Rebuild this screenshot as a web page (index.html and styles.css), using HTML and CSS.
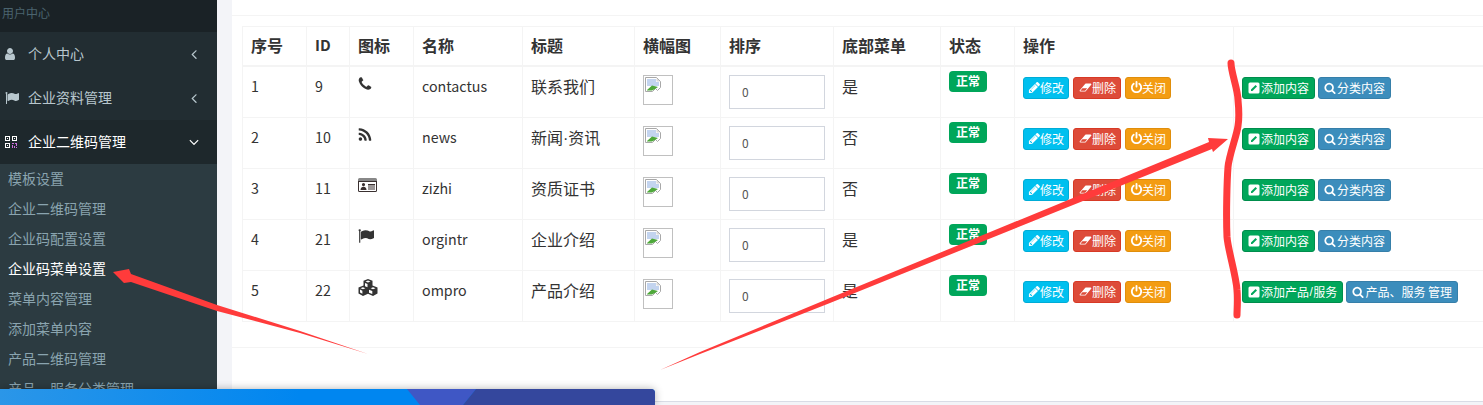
FILE: index.html
```html
<!DOCTYPE html>
<html lang="zh-CN">
<head>
<meta charset="utf-8">
<title>企业码菜单设置</title>
<link rel="stylesheet" href="styles.css">
</head>
<body>
<svg class="sprite" xmlns="http://www.w3.org/2000/svg">
  <symbol id="i-user" viewBox="0 0 1792 1792"><path d="M1536 1399q0 109-62.5 187t-150.5 78h-854q-88 0-150.5-78t-62.5-187q0-85 8.5-160.5t31.5-152 58.5-131 94-89 134.5-34.5q131 128 313 128t313-128q76 0 134.5 34.5t94 89 58.5 131 31.5 152 8.5 160.5zm-256-887q0 159-112.5 271.5t-271.5 112.5-271.5-112.5-112.5-271.5 112.5-271.5 271.5-112.5 271.5 112.5 112.5 271.5z"/></symbol>
  <symbol id="i-flag" viewBox="0 0 1792 1792"><path d="M320 256q0 72-64 110v1266q0 13-9.5 22.5t-22.5 9.5h-64q-13 0-22.5-9.5t-9.5-22.5v-1266q-64-38-64-110 0-53 37.5-90.5t90.5-37.5 90.5 37.5 37.5 90.5zm1472 64v763q0 25-12.5 38.5t-39.5 27.5q-215 116-369 116-61 0-123.5-22t-108.5-48-115.5-48-142.5-22q-192 0-464 146-17 9-33 9-26 0-45-19t-19-45v-742q0-32 31-55 21-14 79-43 236-120 421-120 107 0 200 29t219 88q38 19 88 19 54 0 117.5-21t110-47 88-47 54.5-21q26 0 45 19t19 45z"/></symbol>
  <symbol id="i-qr" viewBox="0 0 12 12"><path fill-rule="evenodd" d="M0 0h5v5H0zM1 1v3h3V1zM7 0h5v5H7zM8 1v3h3V1zM0 7h5v5H0zM1 8v3h3V8zM2 2h1v1H2zM9 2h1v1H9zM2 9h1v1H2z"/><path fill="#d070e0" d="M7 7h2v1H7zM10 7h2v3h-1V8h-1zM7 9h1v3H7zM9 10h1v2H9zM11 11h1v1h-1z"/></symbol>
  <symbol id="i-left" viewBox="0 0 1792 1792"><path d="M1203 544q0 13-10 23l-393 393 393 393q10 10 10 23t-10 23l-50 50q-10 10-23 10t-23-10l-466-466q-10-10-10-23t10-23l466-466q10-10 23-10t23 10l50 50q10 10 10 23z"/></symbol>
  <symbol id="i-down" viewBox="0 0 1792 1792"><path d="M1395 736q0 13-10 23l-466 466q-10 10-23 10t-23-10l-466-466q-10-10-10-23t10-23l50-50q10-10 23-10t23 10l393 393 393-393q10-10 23-10t23 10l50 50q10 10 10 23z"/></symbol>
  <symbol id="i-phone" viewBox="0 0 1792 1792"><path d="M1600 1240q0 27-10 70.5t-21 68.5q-21 50-122 106-94 51-186 51-27 0-53-3.5t-57.5-12.5-47-14.5-55.5-20.5-49-18q-98-35-175-83-127-79-264-216t-216-264q-48-77-83-175-3-9-18-49t-20.5-55.5-14.5-47-12.5-57.5-3.5-53q0-92 51-186 56-101 106-122 25-11 68.5-21t70.5-10q14 0 21 3 18 6 53 76 11 19 30 54t35 63.5 31 53.5q3 4 17.5 25t21.5 35.5 7 28.5q0 20-28.5 50t-62 55-62 53-28.5 46q0 9 5 22.5t8.5 20.5 14 24 11.5 19q76 137 174 235t235 174q2 1 19 11.5t24 14 20.5 8.5 22.5 5q18 0 46-28.5t53-62 55-62 50-28.5q14 0 28.5 7t35.5 21.5 25 17.5q25 15 53.5 31t63.5 35 54 30q70 35 76 53 3 7 3 21z"/></symbol>
  <symbol id="i-rss" viewBox="0 0 1792 1792"><path d="M576 1344q0 80-56 136t-136 56-136-56-56-136 56-136 136-56 136 56 56 136zm512 123q2 28-17 48-18 21-47 21h-135q-25 0-43-16.5t-20-41.5q-22-229-184.5-391.5t-391.5-184.5q-25-2-41.5-20t-16.5-43v-135q0-29 21-47 17-17 43-17h5q160 13 306 80.5t259 181.5q114 113 181.5 259t80.5 306zm512 2q2 27-18 47-18 20-46 20h-143q-26 0-44.5-17.5t-19.5-42.5q-12-215-101-408.5t-231.5-336-336-231.5-408.5-102q-25-1-42.5-19.5t-17.5-43.5v-143q0-28 20-46 18-18 44-18h3q262 13 501.5 120t425.5 294q187 186 294 425.5t120 501.5z"/></symbol>
  <symbol id="i-card" viewBox="0 0 19 14"><path d="M1.500 0h16A1.500 1.500 0 0 1 19 1.500V3H0V1.500A1.500 1.500 0 0 1 1.500 0z" fill="#888"/><path fill-rule="evenodd" d="M0 3h19v9.500a1.500 1.500 0 0 1-1.500 1.500h-16A1.500 1.500 0 0 1 0 12.500zM1 4v8.500a.5.5 0 0 0 .5.5h16a.5.5 0 0 0 .5-.5V4zM5.500 5a1.600 1.600 0 1 1 0 3.200 1.600 1.600 0 0 1 0-3.200zM2.500 12c0-2 1-3.300 3-3.300s3 1.300 3 3.300zM10 6h7v1.500h-7zM10 8.500h7v1h-7zM10 10.500h7v1h-7z"/></symbol>
  <symbol id="i-cubes" viewBox="0 0 20 17"><path fill-rule="evenodd" d="M10 0l4.500 1.800v4.700L19.500 8.500v6L15 17l-5-2.300L5 17 .5 14.500v-6l5-2V1.800zM10 1.500L7.500 2.500 10 3.500l2.500-1zM7 4v3.200l2.500 1V5zM4.900 8.200 2.500 9.300l2.500 1 2.400-1zM2 10.600v2.900l2.400 1.300v-3zM15 8.200l-2.400 1.100 2.400 1 2.500-1zM11 10.800v2.900l3.300 1.300v-3z"/></symbol>
  <symbol id="i-pencil" viewBox="0 0 1792 1792"><path d="M491 1536l91-91-235-235-91 91v107h128v128h107zm523-928q0-22-22-22-10 0-17 7l-542 542q-7 7-7 17 0 22 22 22 10 0 17-7l542-542q7-7 7-17zm-54-192l416 416-832 832h-416v-416zm683 96q0 53-37 90l-166 166-416-416 166-165q36-38 90-38 53 0 91 38l235 234q37 39 37 91z"/></symbol>
  <symbol id="i-eraser" viewBox="0 0 2048 1792"><path d="M960 1408l336-384h-768l-336 384h768zm1013-1077q15 34 9.500 71.500t-30.500 65.500l-896 1024q-38 44-96 44h-768q-38 0-69.500-20.500t-47.500-54.500q-15-34-9.500-71.500t30.500-65.500l896-1024q38-44 96-44h768q38 0 70 20.500t47 54.500z"/></symbol>
  <symbol id="i-power" viewBox="0 0 1792 1792"><path d="M1664 896q0 156-61 298t-164 245-245 164-298 61-298-61-245-164-164-245-61-298q0-182 80.500-343t226.500-270q43-32 95.500-25t83.500 50q32 42 24.500 94.500t-49.500 84.500q-98 74-151.500 181t-53.500 228q0 104 40.500 198.500t109.500 163.500 163.500 109.500 198.500 40.500 198.500-40.500 163.500-109.500 109.500-163.500 40.500-198.500q0-121-53.500-228t-151.500-181q-42-32-49.500-84.500t24.500-94.500q31-43 84-50t95 25q146 109 226.500 270t80.500 343zm-640-768v640q0 52-38 90t-90 38-90-38-38-90v-640q0-52 38-90t90-38 90 38 38 90z"/></symbol>
  <symbol id="i-edit" viewBox="0 0 12 12"><path d="M2 .5h8A1.500 1.500 0 0 1 11.500 2v8a1.500 1.500 0 0 1-1.500 1.500H2A1.500 1.500 0 0 1 .5 10V2A1.500 1.500 0 0 1 2 .5z" fill="#fff"/><path d="M3 9V7.600L7.600 3 9 4.400 4.400 9z" fill="#00a65a"/></symbol>
  <symbol id="i-search" viewBox="0 0 1792 1792"><path d="M1216 832q0-185-131.500-316.500t-316.500-131.500-316.500 131.500-131.500 316.500 131.500 316.500 316.500 131.500 316.500-131.500 131.500-316.500zm512 832q0 52-38 90t-90 38q-54 0-90-38l-343-342q-179 124-399 124-143 0-273.500-55.500t-225-150-150-225-55.500-273.500 55.500-273.500 150-225 225-150 273.500-55.500 273.500 55.500 225 150 150 225 55.500 273.500q0 220-124 399l343 343q37 37 37 90z"/></symbol>
  <symbol id="i-broken" viewBox="0 0 16 16"><path d="M.5.500h11l4 4v6l-3 3-2-2-3 3H.5z" fill="#fff" stroke="#a8a8a8"/><path d="M2 2h9v3h3v4H2z" fill="#c3d4ef"/><path d="M2 13l5-4.500 6 1.500-3 2-3 1.500H2z" fill="#4ea83a"/><path d="M11.500 1l3.500 3.500h-3.500z" fill="#d8d8d8"/></symbol>
</svg>

<div class="app">
  <aside class="sidebar">
    <div class="side-head">用户中心</div>
    <a class="menu"><svg class="mi mi-user"><use href="#i-user"/></svg><span class="menu-text">个人中心</span><svg class="chev"><use href="#i-left"/></svg></a>
    <a class="menu"><svg class="mi"><use href="#i-flag"/></svg><span class="menu-text">企业资料管理</span><svg class="chev"><use href="#i-left"/></svg></a>
    <a class="menu menu-open"><svg class="mi mi-qr"><use href="#i-qr"/></svg><span class="menu-text">企业二维码管理</span><svg class="chev"><use href="#i-down"/></svg></a>
    <ul class="submenu">
      <li>模板设置</li>
      <li>企业二维码管理</li>
      <li>企业码配置设置</li>
      <li class="current">企业码菜单设置</li>
      <li>菜单内容管理</li>
      <li>添加菜单内容</li>
      <li>产品二维码管理</li>
      <li>产品、服务分类管理</li>
    </ul>
  </aside>

  <main class="main">
    <div class="panel-top"></div>
    <div class="panel-body">
      <table class="grid">
        <colgroup>
          <col class="c1"><col class="c2"><col class="c3"><col class="c4"><col class="c5"><col class="c6"><col class="c7"><col class="c8"><col class="c9"><col class="c10"><col class="c11">
        </colgroup>
        <thead>
          <tr><th>序号</th><th>ID</th><th>图标</th><th>名称</th><th>标题</th><th>横幅图</th><th>排序</th><th>底部菜单</th><th>状态</th><th>操作</th><th></th></tr>
        </thead>
        <tbody>
          <tr>
            <td>1</td><td>9</td><td><svg class="ti ti-phone"><use href="#i-phone"/></svg></td><td>contactus</td><td>联系我们</td>
            <td><span class="thumb"><svg class="broken"><use href="#i-broken"/></svg></span></td>
            <td><input class="sort" value="0"></td><td>是</td><td><span class="badge">正常</span></td>
            <td><div class="ops"><a class="btn b-info"><svg class="bi bi-big"><use href="#i-pencil"/></svg>修改</a><a class="btn b-danger"><svg class="bi bi-wide"><use href="#i-eraser"/></svg>删除</a><a class="btn b-warn"><svg class="bi bi-big"><use href="#i-power"/></svg>关闭</a></div></td>
            <td><div class="ops ops-tight"><a class="btn b-ok"><svg class="bi bi-edit"><use href="#i-edit"/></svg>添加内容</a><a class="btn b-pri"><svg class="bi bi-edit"><use href="#i-search"/></svg>分类内容</a></div></td>
          </tr>
          <tr>
            <td>2</td><td>10</td><td><svg class="ti ti-phone"><use href="#i-rss"/></svg></td><td>news</td><td>新闻<span class="narrow">·</span>资讯</td>
            <td><span class="thumb"><svg class="broken"><use href="#i-broken"/></svg></span></td>
            <td><input class="sort" value="0"></td><td>否</td><td><span class="badge">正常</span></td>
            <td><div class="ops"><a class="btn b-info"><svg class="bi bi-big"><use href="#i-pencil"/></svg>修改</a><a class="btn b-danger"><svg class="bi bi-wide"><use href="#i-eraser"/></svg>删除</a><a class="btn b-warn"><svg class="bi bi-big"><use href="#i-power"/></svg>关闭</a></div></td>
            <td><div class="ops ops-tight"><a class="btn b-ok"><svg class="bi bi-edit"><use href="#i-edit"/></svg>添加内容</a><a class="btn b-pri"><svg class="bi bi-edit"><use href="#i-search"/></svg>分类内容</a></div></td>
          </tr>
          <tr>
            <td>3</td><td>11</td><td><svg class="ti ti-card"><use href="#i-card"/></svg></td><td>zizhi</td><td>资质证书</td>
            <td><span class="thumb"><svg class="broken"><use href="#i-broken"/></svg></span></td>
            <td><input class="sort" value="0"></td><td>否</td><td><span class="badge">正常</span></td>
            <td><div class="ops"><a class="btn b-info"><svg class="bi bi-big"><use href="#i-pencil"/></svg>修改</a><a class="btn b-danger"><svg class="bi bi-wide"><use href="#i-eraser"/></svg>删除</a><a class="btn b-warn"><svg class="bi bi-big"><use href="#i-power"/></svg>关闭</a></div></td>
            <td><div class="ops ops-tight"><a class="btn b-ok"><svg class="bi bi-edit"><use href="#i-edit"/></svg>添加内容</a><a class="btn b-pri"><svg class="bi bi-edit"><use href="#i-search"/></svg>分类内容</a></div></td>
          </tr>
          <tr>
            <td>4</td><td>21</td><td><svg class="ti ti-flag"><use href="#i-flag"/></svg></td><td>orgintr</td><td>企业介绍</td>
            <td><span class="thumb"><svg class="broken"><use href="#i-broken"/></svg></span></td>
            <td><input class="sort" value="0"></td><td>是</td><td><span class="badge">正常</span></td>
            <td><div class="ops"><a class="btn b-info"><svg class="bi bi-big"><use href="#i-pencil"/></svg>修改</a><a class="btn b-danger"><svg class="bi bi-wide"><use href="#i-eraser"/></svg>删除</a><a class="btn b-warn"><svg class="bi bi-big"><use href="#i-power"/></svg>关闭</a></div></td>
            <td><div class="ops ops-tight"><a class="btn b-ok"><svg class="bi bi-edit"><use href="#i-edit"/></svg>添加内容</a><a class="btn b-pri"><svg class="bi bi-edit"><use href="#i-search"/></svg>分类内容</a></div></td>
          </tr>
          <tr>
            <td>5</td><td>22</td><td><svg class="ti ti-cubes"><use href="#i-cubes"/></svg></td><td>ompro</td><td>产品介绍</td>
            <td><span class="thumb"><svg class="broken"><use href="#i-broken"/></svg></span></td>
            <td><input class="sort" value="0"></td><td>是</td><td><span class="badge">正常</span></td>
            <td><div class="ops"><a class="btn b-info"><svg class="bi bi-big"><use href="#i-pencil"/></svg>修改</a><a class="btn b-danger"><svg class="bi bi-wide"><use href="#i-eraser"/></svg>删除</a><a class="btn b-warn"><svg class="bi bi-big"><use href="#i-power"/></svg>关闭</a></div></td>
            <td><div class="ops ops-tight"><a class="btn b-ok"><svg class="bi bi-edit"><use href="#i-edit"/></svg>添加产品<span class="narrow slash">/</span>服务</a><a class="btn b-pri"><svg class="bi bi-edit"><use href="#i-search"/></svg>产品、服务 管理</a></div></td>
          </tr>
        </tbody>
      </table>
    </div>
    <div class="panel-foot"></div>
  </main>
</div>

<div class="bottom-bar" aria-hidden="true">
  <svg class="bar-art" viewBox="0 0 655 16" preserveAspectRatio="none">
    <polygon points="407,0 476,0 463,16 420,16" fill="#3f57c5"/>
    <polygon points="476,0 655,0 655,16 463,16" fill="#34479d"/>
  </svg>
</div>

<svg class="marks" viewBox="0 0 1483 405" aria-hidden="true">
  <polygon class="mark-fill" points="113,272 129,269 131,274 217,305 300,331 368,354 300,333 217,311 131,282 124,283"/>
  <polygon class="mark-fill" points="660,370 700,352 830,298 1209,142 1208,138 1228,139 1213,152 1212,149 830,303 700,354"/>
  <path class="mark-line" d="M1231 63C1231 72 1238 90 1238 100C1239 110 1239 120 1238 126C1237 135 1229 155 1228 167C1227 180 1226 215 1227 237C1228 250 1236 275 1237 290C1238 300 1237 310 1237 315"/>
</svg>
</body>
</html>
```

FILE: styles.css
```css
* { box-sizing: border-box; }
html, body { margin: 0; padding: 0; height: 405px; overflow: hidden; }
body {
  position: relative;
  background: #f3f4f8;
  font-family: "Noto Sans CJK SC", "Noto Sans", sans-serif;
  font-size: 14px;
  color: #333;
}
.sprite { position: absolute; width: 0; height: 0; }

.app { display: flex; height: 405px; }

/* sidebar */
.sidebar { width: 217px; flex: none; background: #222d32; overflow: hidden; height: 405px; }
.side-head {
  height: 32px;
  padding: 4px 0 0 2px;
  background: #1a2226;
  color: #4b646f;
  font-size: 12px;
  line-height: 18px;
}
.menu {
  display: flex;
  align-items: center;
  height: 44px;
  padding-left: 5px;
  color: #b8c7ce;
  fill: #b8c7ce;
}
.menu-open { background: #1e282c; color: #fff; fill: #fff; }
.mi { width: 14px; height: 14px; flex: none; margin-right: 9px; }
.mi-user { margin-left: -2px; margin-right: 11px; }
.mi-qr { width: 12px; height: 12px; margin-right: 11px; fill: #fff; }
.menu-text { flex: 1; line-height: 20px; padding-bottom: 2px; }
.chev { width: 16px; height: 16px; flex: none; margin-right: 15px; }
.submenu { list-style: none; margin: 0; padding: 0; background: #2c3b41; height: 241px; }
.submenu li { height: 30px; line-height: 28px; padding-left: 8px; color: #8aa4af; }
.submenu .current { color: #fff; }

/* main */
.main { flex: 1; min-width: 0; margin-left: 15px; height: 402px; background: #fff; border-bottom: 1px solid #d9dce6; overflow: hidden; display: flex; flex-direction: column; }
.panel-top { height: 16px; flex: none; border-bottom: 1px solid #f4f4f4; }
.panel-body { flex: none; padding: 10px 0 25px 10px; border-bottom: 1px solid #f4f4f4; }
.panel-foot { flex: 1; }

.grid { border-collapse: collapse; table-layout: fixed; width: 1320px; font-size: 16px; line-height: 22.857px; }
.c1 { width: 64px; } .c2 { width: 43px; } .c3 { width: 64px; } .c4 { width: 109px; }
.c5 { width: 112px; } .c6 { width: 86px; } .c7 { width: 113px; } .c8 { width: 107px; }
.c9 { width: 74px; } .c10 { width: 219px; } .c11 { width: 329px; }
.grid th, .grid td { border: 1px solid #f4f4f4; padding: 8px; text-align: left; vertical-align: top; }
.grid th { border-bottom-width: 2px; font-weight: 700; height: 39px; padding: 7px 8px; }
.grid th:nth-child(2) { font-size: 15px; }
.grid td { height: 51px; }
.grid td:nth-child(-n+2), .grid td:nth-child(4) { font-size: 14.25px; }
.narrow { font-family: "Liberation Sans", sans-serif; }

.ti { display: block; fill: #333; margin-top: 1px; }
.ti-phone { width: 16px; height: 16px; margin-left: -1px; }
.ti-card { width: 19px; height: 14px; fill: #3a3030; }
.ti-flag { width: 16px; height: 16px; margin-top: 0; }
.ti-cubes { width: 20px; height: 17px; margin-top: 0; }

.thumb { display: block; width: 30px; height: 30px; border: 1px solid #c0c0c0; padding: 1px; }
.broken { display: block; width: 16px; height: 16px; }

.sort {
  display: block;
  width: 96px;
  height: 34px;
  padding: 0 12px;
  border: 1px solid #d2d6de;
  color: #555;
  font: 12px "Noto Sans CJK SC", sans-serif;
}

.badge {
  display: block;
  width: 38px;
  height: 21px;
  margin-top: -4px;
  border-radius: 4px;
  background: #00a65a;
  color: #fff;
  font-size: 12px;
  font-weight: 700;
  line-height: 20px;
  text-align: center;
}

.ops { display: flex; gap: 4px; margin-top: 2px; white-space: nowrap; }
.ops-tight { gap: 3px; }
.btn {
  display: flex;
  align-items: center;
  height: 22px;
  padding: 0 4px 0 5px;
  border: 1px solid;
  border-radius: 3px;
  color: #fff;
  fill: #fff;
  font-size: 12px;
  line-height: 18px;
}
.ops-tight .btn { padding-right: 5px; }
.bi { width: 11px; height: 11px; flex: none; }
.bi-big { width: 13px; height: 13px; margin: 0 -1px; }
.bi-wide { width: 13px; }
.bi-edit { width: 12px; height: 12px; margin-right: 1px; }
.slash { padding: 0 .5px; }
.b-info { background: #00c0ef; border-color: #00acd6; }
.b-danger { background: #dd4b39; border-color: #d73925; }
.b-warn { background: #f39c12; border-color: #e08e0b; }
.b-ok { background: #00a65a; border-color: #008d4c; }
.b-pri { background: #3c8dbc; border-color: #367fa9; }

/* overlays: cropped screenshot artefacts */
.bottom-bar {
  position: absolute;
  left: 0;
  top: 389px;
  width: 655px;
  height: 16px;
  border-top-right-radius: 4px;
  background: linear-gradient(90deg, #2b96e8 0, #0086f0 300px);
  box-shadow: 0 0 8px rgba(0, 0, 0, .3);
  overflow: hidden;
}
.bar-art { display: block; width: 655px; height: 16px; }
.marks { position: absolute; left: 0; top: 0; width: 1483px; height: 405px; pointer-events: none; }
.mark-fill { fill: #ff3b3b; }
.mark-line { fill: none; stroke: #ff3b3b; stroke-width: 7; stroke-linecap: round; stroke-linejoin: round; }
```
